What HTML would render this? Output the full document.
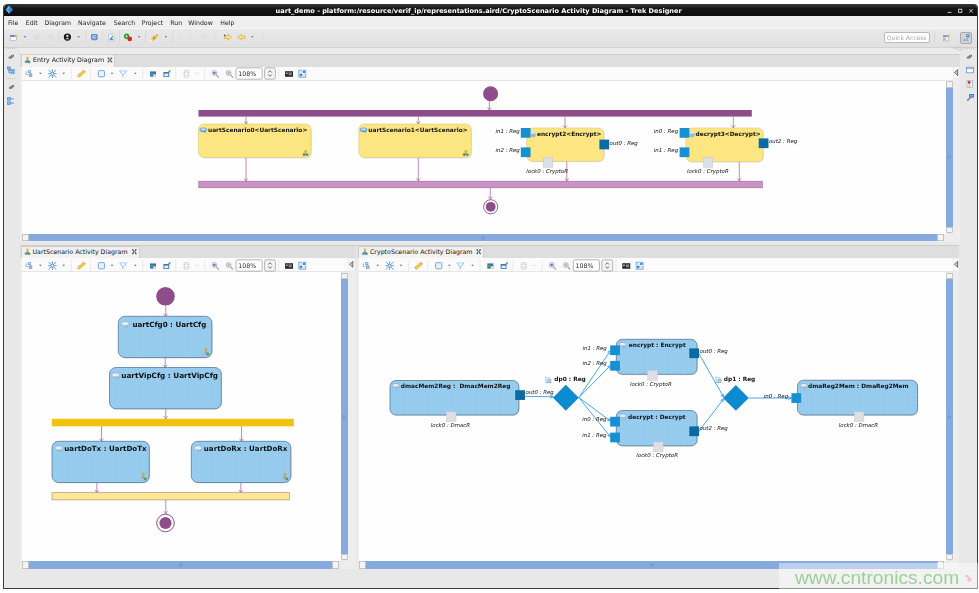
<!DOCTYPE html>
<html><head><meta charset="utf-8"><title>uart_demo - Trek Designer</title>
<style>
html,body{margin:0;padding:0;background:#fff;}
body{width:979px;height:593px;overflow:hidden;position:relative;font-family:"DejaVu Sans","Liberation Sans",sans-serif;font-size:6.2px;color:#222;}
div,span{position:absolute;box-sizing:border-box;white-space:nowrap;}
#win{left:3px;top:4px;width:975px;height:584.7px;background:#e8e8e8;border:1px solid #3c3c3c;border-top:none;border-radius:4px 4px 0 0;overflow:hidden;}
#title{left:0;top:0;width:975px;height:12px;background:linear-gradient(#3a3a3a,#141414 40%,#0c0c0c);border-radius:4px 4px 0 0;color:#fff;font-weight:bold;font-size:6.57px;line-height:12px;text-align:left;}
#menu{left:0;top:12px;width:975px;height:12.5px;background:#efefef;border-bottom:1px solid #f6f6f6;}
#menu span{top:0.6px;line-height:12.5px;font-size:6.2px;color:#1a1a1a;}
#tb{left:0;top:24.5px;width:975px;height:19.5px;background:linear-gradient(#e8e8e8,#e1e1e1);border-bottom:1px solid #d0d0d0;}
.tabstrip{background:#dedede;border-top:1px solid #cdcdcd;}
.tab{background:linear-gradient(#eeeeee,#f3f3f3);border:1px solid #d0d0d0;border-bottom:none;border-radius:2px 2px 0 0;font-size:6.28px;line-height:11.5px;color:#111;}
.etb{background:#fbfbfb;border-bottom:1px solid #e6e6e6;}
.canvas{background:#fefefe;}
.sb{background:#86a9de;}
.sbh{background:linear-gradient(#8fb0e3,#7fa4dc);}
.sbtn{background:#f4f4f4;border:1px solid #c4c4c4;border-radius:1px;}
.sep{width:0;border-left:1px dotted #cbcbcb;}
.zoom{background:#fff;border:1px solid #a9a9a9;border-radius:2px;font-size:6.2px;line-height:10px;padding-left:2px;color:#222;}
svg{position:absolute;left:0;top:0;opacity:0.999;}
#win{opacity:0.999;}
</style></head><body>

<div id="win">
<div id="title"><span style="left:271.6px;top:0.7px">uart_demo - platform:/resource/verif_ip/representations.aird/CryptoScenario Activity Diagram - Trek Designer</span></div>
<div id="menu">
<span style="left:4px">File</span>
<span style="left:21.8px">Edit</span>
<span style="left:40.5px">Diagram</span>
<span style="left:74px">Navigate</span>
<span style="left:109.8px">Search</span>
<span style="left:137.8px">Project</span>
<span style="left:166.3px">Run</span>
<span style="left:184.3px">Window</span>
<span style="left:216.3px">Help</span>
</div>
<div id="tb"></div>
<div style="left:880.00px;top:27.50px;width:45.50px;height:11.00px;background:#fff;border:1px solid #b9b9b9;border-radius:2px;color:#aaa;font-size:6.05px;line-height:9px;padding-left:1.8px;">Quick Access</div>
<div class="sep" style="left:930.00px;top:27.00px;width:0.00px;height:12.00px;"></div>
<div style="left:955.50px;top:27.50px;width:12.50px;height:12.00px;background:#d4d4d4;border:1px solid #a8a8a8;border-radius:2px;"></div>
<div style="left:15.50px;top:43.30px;width:940.00px;height:6.50px;background:#ececec;border-top:1px solid #d3d3d3;"></div>
<div style="left:15.50px;top:49.00px;width:940.00px;height:189.30px;background:#ededed;"></div>
<div class="tabstrip" style="left:15.50px;top:49.50px;width:940.00px;height:13.00px;"></div>
<div class="tab" style="left:17.00px;top:50.00px;width:93.50px;height:12.50px;"><span style="left:11.00px;top:-0.6px">Entry Activity Diagram</span></div>
<div class="etb" style="left:18.00px;top:62.50px;width:930.70px;height:14.40px;"></div>
<div style="left:949.70px;top:63.10px;width:4.80px;height:11.00px;background:#fbfbfb;"></div>
<div class="canvas" style="left:18.00px;top:76.90px;width:923.70px;height:153.10px;"></div>
<div style="left:941.70px;top:76.90px;width:7.00px;height:153.10px;background:#e9e9e9;"></div>
<div class="sb" style="left:941.70px;top:83.40px;width:7.00px;height:139.60px;"></div>
<div class="sbtn" style="left:941.70px;top:77.20px;width:7.00px;height:6.70px;"></div>
<div class="sbtn" style="left:941.70px;top:222.50px;width:7.00px;height:6.70px;"></div>
<div class="sb" style="left:18.00px;top:230.00px;width:922.20px;height:7.30px;"></div>
<div class="sbtn" style="left:18.00px;top:230.00px;width:6.80px;height:7.30px;"></div>
<div class="sbtn" style="left:933.00px;top:230.00px;width:7.20px;height:7.30px;"></div>
<div style="left:15.50px;top:240.50px;width:336.80px;height:324.80px;background:#ededed;"></div>
<div class="tabstrip" style="left:15.50px;top:241.00px;width:336.80px;height:13.00px;"></div>
<div class="tab" style="left:17.00px;top:241.50px;width:119.00px;height:12.50px;"><span style="left:10.50px;top:-0.6px">UartScenario Activity Diagram</span></div>
<div class="etb" style="left:18.00px;top:254.00px;width:325.80px;height:14.40px;"></div>
<div style="left:344.80px;top:254.60px;width:4.80px;height:11.00px;background:#fbfbfb;"></div>
<div class="canvas" style="left:18.00px;top:268.40px;width:318.80px;height:288.60px;"></div>
<div style="left:336.80px;top:268.40px;width:7.00px;height:288.60px;background:#e9e9e9;"></div>
<div class="sb" style="left:336.80px;top:274.90px;width:7.00px;height:275.10px;"></div>
<div class="sbtn" style="left:336.80px;top:268.70px;width:7.00px;height:6.70px;"></div>
<div class="sbtn" style="left:336.80px;top:549.50px;width:7.00px;height:6.70px;"></div>
<div class="sb" style="left:18.00px;top:557.00px;width:317.30px;height:8.00px;"></div>
<div class="sbtn" style="left:18.00px;top:557.00px;width:6.80px;height:8.00px;"></div>
<div class="sbtn" style="left:328.10px;top:557.00px;width:7.20px;height:8.00px;"></div>
<div style="left:352.80px;top:240.50px;width:602.70px;height:324.80px;background:#ededed;"></div>
<div class="tabstrip" style="left:352.80px;top:241.00px;width:602.70px;height:13.00px;"></div>
<div class="tab" style="left:354.30px;top:241.50px;width:125.50px;height:12.50px;"><span style="left:10.70px;top:-0.6px">CryptoScenario Activity Diagram</span></div>
<div class="etb" style="left:354.80px;top:254.00px;width:593.90px;height:14.40px;"></div>
<div style="left:949.70px;top:254.60px;width:4.80px;height:11.00px;background:#fbfbfb;"></div>
<div class="canvas" style="left:354.80px;top:268.40px;width:586.90px;height:288.60px;"></div>
<div style="left:941.70px;top:268.40px;width:7.00px;height:288.60px;background:#e9e9e9;"></div>
<div class="sb" style="left:941.70px;top:274.90px;width:7.00px;height:275.10px;"></div>
<div class="sbtn" style="left:941.70px;top:268.70px;width:7.00px;height:6.70px;"></div>
<div class="sbtn" style="left:941.70px;top:549.50px;width:7.00px;height:6.70px;"></div>
<div class="sb" style="left:354.80px;top:557.00px;width:585.40px;height:8.00px;"></div>
<div class="sbtn" style="left:354.80px;top:557.00px;width:6.80px;height:8.00px;"></div>
<div class="sbtn" style="left:933.00px;top:557.00px;width:7.20px;height:8.00px;"></div>
</div>
<svg width="979" height="593" viewBox="0 0 979 593" style="font-family:DejaVu Sans,Liberation Sans,sans-serif"><defs><pattern id="dy" width="3" height="4" patternUnits="userSpaceOnUse"><circle cx="0.75" cy="1" r="0.45" fill="#f5d05a"/><circle cx="2.25" cy="3" r="0.45" fill="#f5d05a"/></pattern><pattern id="db" width="3" height="4" patternUnits="userSpaceOnUse"><circle cx="0.75" cy="1" r="0.45" fill="#62bdee"/><circle cx="2.25" cy="3" r="0.45" fill="#62bdee"/></pattern></defs><circle cx="490.6" cy="93.8" r="7.5" fill="#8e4c8b"/>
<path d="M489.30 101.00V110.00M487.48 107.40L489.30 110.00L491.12 107.40" fill="none" stroke="#a25f9e" stroke-width="0.7"/>
<rect x="198.5" y="110" width="553.3" height="6.6" fill="#8e4c8b"/>
<rect x="198.8" y="181.2" width="563.5" height="6.6" fill="#c993c4" stroke="#a0639c" stroke-width="0.6"/>
<path d="M246.00 116.60V124.00M244.18 121.40L246.00 124.00L247.82 121.40" fill="none" stroke="#a25f9e" stroke-width="0.7"/>
<path d="M246.00 157.50V181.00M244.18 178.40L246.00 181.00L247.82 178.40" fill="none" stroke="#a25f9e" stroke-width="0.7"/>
<rect x="199.40" y="124.90" width="112.50" height="33.50" rx="5.5" fill="#000" opacity="0.10"/>
<rect x="198.50" y="124.00" width="112.50" height="33.50" rx="5.5" fill="#fde785" stroke="#d5c06a" stroke-width="0.5"/>
<rect x="199.50" y="125.00" width="110.50" height="31.50" rx="5.5" fill="url(#dy)"/>
<g transform="translate(199.40,127.60)"><ellipse cx="3.80" cy="2.27" rx="3.80" ry="2.27" fill="#6ea6d8"/><ellipse cx="3.80" cy="1.78" rx="2.74" ry="1.08" fill="#bcdcf4"/><path d="M3.42 3.78L6.08 5.4L6.08 3.24Z" fill="#5b96cc"/></g>
<text x="208.00" y="132.16" style="font-size:5.85px;font-weight:bold;" fill="#111" xml:space="preserve">uartScenario0&lt;UartScenario&gt;</text>
<g transform="translate(302.80,150.00)"><circle cx="2.8" cy="1.3" r="1.3" fill="#e8a92c"/><circle cx="1.4" cy="4.4" r="1.5" fill="#4b86c8"/><circle cx="4.3" cy="4.6" r="1.4" fill="#4aa24a"/><path d="M2.8 2.2L1.6 3.6M2.8 2.2L4 3.6" stroke="#777" stroke-width="0.4"/></g>
<path d="M418.30 116.60V124.00M416.48 121.40L418.30 124.00L420.12 121.40" fill="none" stroke="#a25f9e" stroke-width="0.7"/>
<path d="M418.30 157.50V181.00M416.48 178.40L418.30 181.00L420.12 178.40" fill="none" stroke="#a25f9e" stroke-width="0.7"/>
<rect x="359.70" y="124.90" width="112.40" height="33.50" rx="5.5" fill="#000" opacity="0.10"/>
<rect x="358.80" y="124.00" width="112.40" height="33.50" rx="5.5" fill="#fde785" stroke="#d5c06a" stroke-width="0.5"/>
<rect x="359.80" y="125.00" width="110.40" height="31.50" rx="5.5" fill="url(#dy)"/>
<g transform="translate(359.70,127.60)"><ellipse cx="3.80" cy="2.27" rx="3.80" ry="2.27" fill="#6ea6d8"/><ellipse cx="3.80" cy="1.78" rx="2.74" ry="1.08" fill="#bcdcf4"/><path d="M3.42 3.78L6.08 5.4L6.08 3.24Z" fill="#5b96cc"/></g>
<text x="368.30" y="132.16" style="font-size:5.85px;font-weight:bold;" fill="#111" xml:space="preserve">uartScenario1&lt;UartScenario&gt;</text>
<g transform="translate(463.00,150.00)"><circle cx="2.8" cy="1.3" r="1.3" fill="#e8a92c"/><circle cx="1.4" cy="4.4" r="1.5" fill="#4b86c8"/><circle cx="4.3" cy="4.6" r="1.4" fill="#4aa24a"/><path d="M2.8 2.2L1.6 3.6M2.8 2.2L4 3.6" stroke="#777" stroke-width="0.4"/></g>
<path d="M565.00 116.60V128.00M563.18 125.40L565.00 128.00L566.82 125.40" fill="none" stroke="#a25f9e" stroke-width="0.7"/>
<path d="M566.80 161.30V181.00M564.98 178.40L566.80 181.00L568.62 178.40" fill="none" stroke="#a25f9e" stroke-width="0.7"/>
<rect x="527.70" y="128.90" width="77.00" height="33.30" rx="5.5" fill="#000" opacity="0.10"/>
<rect x="526.80" y="128.00" width="77.00" height="33.30" rx="5.5" fill="#fde785" stroke="#d5c06a" stroke-width="0.5"/>
<rect x="527.80" y="129.00" width="75.00" height="31.30" rx="5.5" fill="url(#dy)"/>
<rect x="520.80" y="128.00" width="9.75" height="9.75" fill="#1590d2"/>
<rect x="520.80" y="147.40" width="9.75" height="9.75" fill="#1590d2"/>
<rect x="599.40" y="139.60" width="9.75" height="9.75" fill="#0a6aa3"/>
<rect x="543.20" y="157.60" width="9.6" height="9.6" fill="#dcdfe4" stroke="#c4c8ce" stroke-width="0.5"/>
<g transform="translate(530.70,131.50)"><rect x="0" y="0.8" width="4.6" height="4.6" rx="0.8" fill="#a6c3e6" stroke="#86a4cf" stroke-width="0.4"/><ellipse cx="2.3" cy="1.2" rx="2.3" ry="1" fill="#dce8f6"/><path d="M0.6 3.2H4M0.6 4.4H4" stroke="#7d9ccc" stroke-width="0.4"/></g>
<text x="537.00" y="136.16" style="font-size:5.85px;font-weight:bold;" fill="#111" xml:space="preserve">encrypt2&lt;Encrypt&gt;</text>
<text x="495.50" y="132.69" style="font-size:5.45px;font-style:italic;" fill="#111" xml:space="preserve">in1 : Reg</text>
<text x="495.50" y="152.09" style="font-size:5.45px;font-style:italic;" fill="#111" xml:space="preserve">in2 : Reg</text>
<text x="609.60" y="144.99" style="font-size:5.45px;font-style:italic;" fill="#111" xml:space="preserve">out0 : Reg</text>
<text x="526.30" y="172.88" style="font-size:5.45px;font-style:italic;" fill="#111" xml:space="preserve">lock0 : CryptoR</text>
<path d="M733.30 116.60V128.00M731.48 125.40L733.30 128.00L735.12 125.40" fill="none" stroke="#a25f9e" stroke-width="0.7"/>
<path d="M739.30 161.60V181.00M737.48 178.40L739.30 181.00L741.12 178.40" fill="none" stroke="#a25f9e" stroke-width="0.7"/>
<rect x="686.70" y="128.90" width="77.20" height="33.60" rx="5.5" fill="#000" opacity="0.10"/>
<rect x="685.80" y="128.00" width="77.20" height="33.60" rx="5.5" fill="#fde785" stroke="#d5c06a" stroke-width="0.5"/>
<rect x="686.80" y="129.00" width="75.20" height="31.60" rx="5.5" fill="url(#dy)"/>
<rect x="679.60" y="128.00" width="9.75" height="9.75" fill="#1590d2"/>
<rect x="679.60" y="147.40" width="9.75" height="9.75" fill="#1590d2"/>
<rect x="758.70" y="138.40" width="9.75" height="9.75" fill="#0a6aa3"/>
<rect x="703.20" y="157.60" width="9.6" height="9.6" fill="#dcdfe4" stroke="#c4c8ce" stroke-width="0.5"/>
<g transform="translate(689.60,131.50)"><rect x="0" y="0.8" width="4.6" height="4.6" rx="0.8" fill="#a6c3e6" stroke="#86a4cf" stroke-width="0.4"/><ellipse cx="2.3" cy="1.2" rx="2.3" ry="1" fill="#dce8f6"/><path d="M0.6 3.2H4M0.6 4.4H4" stroke="#7d9ccc" stroke-width="0.4"/></g>
<text x="695.50" y="136.16" style="font-size:5.85px;font-weight:bold;" fill="#111" xml:space="preserve">decrypt3&lt;Decrypt&gt;</text>
<text x="653.80" y="132.69" style="font-size:5.45px;font-style:italic;" fill="#111" xml:space="preserve">in0 : Reg</text>
<text x="653.80" y="152.09" style="font-size:5.45px;font-style:italic;" fill="#111" xml:space="preserve">in1 : Reg</text>
<text x="769.00" y="143.49" style="font-size:5.45px;font-style:italic;" fill="#111" xml:space="preserve">out2 : Reg</text>
<text x="687.00" y="172.88" style="font-size:5.45px;font-style:italic;" fill="#111" xml:space="preserve">lock0 : CryptoR</text>
<path d="M490.30 188.00V199.20M488.48 196.60L490.30 199.20L492.12 196.60" fill="none" stroke="#a25f9e" stroke-width="0.7"/>
<circle cx="490.7" cy="206.8" r="7.1" fill="#fff" stroke="#8e4c8b" stroke-width="0.9"/><circle cx="490.7" cy="206.8" r="4.9" fill="#8e4c8b"/>
<circle cx="165.5" cy="296.3" r="9.3" fill="#8e4c8b"/>
<path d="M165.80 305.50V316.30M163.98 313.70L165.80 316.30L167.62 313.70" fill="none" stroke="#a25f9e" stroke-width="0.7"/>
<rect x="119.20" y="317.20" width="93.60" height="41.30" rx="6.5" fill="#000" opacity="0.10"/>
<rect x="118.30" y="316.30" width="93.60" height="41.30" rx="6.5" fill="#9acced" stroke="#466b86" stroke-width="0.7"/>
<rect x="119.30" y="317.30" width="91.60" height="39.30" rx="6.5" fill="url(#db)"/>
<g transform="translate(121.00,321.40)"><ellipse cx="4.25" cy="2.34" rx="3.95" ry="2.21" fill="#e3edf7" stroke="#8a9fba" stroke-width="0.6"/><path d="M4.68 3.90V6.5M6.80 3.90V6.5" stroke="#8fa9c4" stroke-width="0.7" fill="none"/></g>
<text x="132.50" y="327.04" style="font-size:7.12px;font-weight:bold;" fill="#111" xml:space="preserve">uartCfg0 : UartCfg</text>
<g transform="translate(202.80,347.70)"><circle cx="3.2" cy="1.7" r="1.6" fill="#e9aa2e"/><path d="M3.2 0.2L4 1H2.4Z" fill="#58a84a"/><path d="M0.3 7.2L3 3.2L5.6 7.2Z" fill="#8fa6d4" stroke="#6f88bb" stroke-width="0.4"/><ellipse cx="1.8" cy="6.6" rx="1.8" ry="1" fill="#b4bfe0"/><circle cx="5.2" cy="6.2" r="1.4" fill="#4aa63c"/></g>
<path d="M165.20 357.60V367.50M163.38 364.90L165.20 367.50L167.02 364.90" fill="none" stroke="#a25f9e" stroke-width="0.7"/>
<rect x="110.40" y="368.40" width="111.80" height="41.30" rx="6.5" fill="#000" opacity="0.10"/>
<rect x="109.50" y="367.50" width="111.80" height="41.30" rx="6.5" fill="#9acced" stroke="#466b86" stroke-width="0.7"/>
<rect x="110.50" y="368.50" width="109.80" height="39.30" rx="6.5" fill="url(#db)"/>
<g transform="translate(111.50,372.60)"><ellipse cx="4.25" cy="2.34" rx="3.95" ry="2.21" fill="#e3edf7" stroke="#8a9fba" stroke-width="0.6"/><path d="M4.68 3.90V6.5M6.80 3.90V6.5" stroke="#8fa9c4" stroke-width="0.7" fill="none"/></g>
<text x="121.30" y="378.38" style="font-size:7.28px;font-weight:bold;" fill="#111" xml:space="preserve">uartVipCfg : UartVipCfg</text>
<path d="M165.80 408.80V418.80M163.98 416.20L165.80 418.80L167.62 416.20" fill="none" stroke="#a25f9e" stroke-width="0.7"/>
<rect x="51.8" y="418.8" width="242" height="7.5" fill="#efc30e"/>
<path d="M101.50 426.30V441.30M99.68 438.70L101.50 441.30L103.32 438.70" fill="none" stroke="#a25f9e" stroke-width="0.7"/>
<path d="M241.50 426.30V441.30M239.68 438.70L241.50 441.30L243.32 438.70" fill="none" stroke="#a25f9e" stroke-width="0.7"/>
<rect x="52.90" y="442.20" width="97.30" height="41.20" rx="6.5" fill="#000" opacity="0.10"/>
<rect x="52.00" y="441.30" width="97.30" height="41.20" rx="6.5" fill="#9acced" stroke="#466b86" stroke-width="0.7"/>
<rect x="53.00" y="442.30" width="95.30" height="39.20" rx="6.5" fill="url(#db)"/>
<g transform="translate(54.50,445.60)"><ellipse cx="4.25" cy="2.34" rx="3.95" ry="2.21" fill="#e3edf7" stroke="#8a9fba" stroke-width="0.6"/><path d="M4.68 3.90V6.5M6.80 3.90V6.5" stroke="#8fa9c4" stroke-width="0.7" fill="none"/></g>
<text x="64.30" y="451.33" style="font-size:7.1px;font-weight:bold;" fill="#111" xml:space="preserve">uartDoTx : UartDoTx</text>
<g transform="translate(140.20,472.60)"><circle cx="3.2" cy="1.7" r="1.6" fill="#e9aa2e"/><path d="M3.2 0.2L4 1H2.4Z" fill="#58a84a"/><path d="M0.3 7.2L3 3.2L5.6 7.2Z" fill="#8fa6d4" stroke="#6f88bb" stroke-width="0.4"/><ellipse cx="1.8" cy="6.6" rx="1.8" ry="1" fill="#b4bfe0"/><circle cx="5.2" cy="6.2" r="1.4" fill="#4aa63c"/></g>
<rect x="192.20" y="442.20" width="99.50" height="41.20" rx="6.5" fill="#000" opacity="0.10"/>
<rect x="191.30" y="441.30" width="99.50" height="41.20" rx="6.5" fill="#9acced" stroke="#466b86" stroke-width="0.7"/>
<rect x="192.30" y="442.30" width="97.50" height="39.20" rx="6.5" fill="url(#db)"/>
<g transform="translate(193.80,445.60)"><ellipse cx="4.25" cy="2.34" rx="3.95" ry="2.21" fill="#e3edf7" stroke="#8a9fba" stroke-width="0.6"/><path d="M4.68 3.90V6.5M6.80 3.90V6.5" stroke="#8fa9c4" stroke-width="0.7" fill="none"/></g>
<text x="203.80" y="451.33" style="font-size:7.1px;font-weight:bold;" fill="#111" xml:space="preserve">uartDoRx : UartDoRx</text>
<g transform="translate(281.70,472.60)"><circle cx="3.2" cy="1.7" r="1.6" fill="#e9aa2e"/><path d="M3.2 0.2L4 1H2.4Z" fill="#58a84a"/><path d="M0.3 7.2L3 3.2L5.6 7.2Z" fill="#8fa6d4" stroke="#6f88bb" stroke-width="0.4"/><ellipse cx="1.8" cy="6.6" rx="1.8" ry="1" fill="#b4bfe0"/><circle cx="5.2" cy="6.2" r="1.4" fill="#4aa63c"/></g>
<path d="M96.80 482.50V492.50M94.98 489.90L96.80 492.50L98.62 489.90" fill="none" stroke="#a25f9e" stroke-width="0.7"/>
<path d="M240.80 482.50V492.50M238.98 489.90L240.80 492.50L242.62 489.90" fill="none" stroke="#a25f9e" stroke-width="0.7"/>
<rect x="52" y="492.7" width="237.4" height="7.2" fill="#fde88e" stroke="#a979a6" stroke-width="0.6"/>
<path d="M165.80 500.00V513.80M163.98 511.20L165.80 513.80L167.62 511.20" fill="none" stroke="#a25f9e" stroke-width="0.7"/>
<circle cx="165.5" cy="523" r="8.8" fill="#fff" stroke="#8e4c8b" stroke-width="1"/><circle cx="165.5" cy="523" r="6.1" fill="#8e4c8b"/>
<path d="M525.00 396.30L553.20 396.80M550.17 395.27L553.20 396.80L550.11 398.22" fill="none" stroke="#48a6ea" stroke-width="1.0"/>
<path d="M578.80 397.50L610.50 350.50M607.56 352.21L610.50 350.50L610.01 353.87" fill="none" stroke="#48a6ea" stroke-width="1.0"/>
<path d="M578.80 397.50L610.50 365.50M607.29 366.63L610.50 365.50L609.40 368.72" fill="none" stroke="#48a6ea" stroke-width="1.0"/>
<path d="M578.80 397.50L610.50 421.00M608.92 417.99L610.50 421.00L607.16 420.36" fill="none" stroke="#48a6ea" stroke-width="1.0"/>
<path d="M578.80 397.50L610.50 437.00M609.74 433.69L610.50 437.00L607.43 435.54" fill="none" stroke="#48a6ea" stroke-width="1.0"/>
<path d="M698.80 353.30L723.50 397.00M723.28 393.61L723.50 397.00L720.71 395.06" fill="none" stroke="#48a6ea" stroke-width="1.0"/>
<path d="M698.80 431.30L723.50 399.00M720.47 400.53L723.50 399.00L722.82 402.33" fill="none" stroke="#48a6ea" stroke-width="1.0"/>
<path d="M748.80 398.00L791.30 398.00M788.24 396.52L791.30 398.00L788.24 399.48" fill="none" stroke="#48a6ea" stroke-width="1.0"/>
<rect x="390.90" y="381.40" width="128.80" height="34.50" rx="6" fill="#000" opacity="0.10"/>
<rect x="390.00" y="380.50" width="128.80" height="34.50" rx="6" fill="#9acced" stroke="#466b86" stroke-width="0.7"/>
<rect x="391.00" y="381.50" width="126.80" height="32.50" rx="6" fill="url(#db)"/>
<g transform="translate(392.00,383.30)"><ellipse cx="3.75" cy="2.02" rx="3.45" ry="1.90" fill="#e3edf7" stroke="#8a9fba" stroke-width="0.6"/><path d="M4.12 3.36V5.6M6.00 3.36V5.6" stroke="#8fa9c4" stroke-width="0.7" fill="none"/></g>
<text x="400.80" y="388.45" style="font-size:5.85px;font-weight:bold;" fill="#111" xml:space="preserve">dmacMem2Reg :  DmacMem2Reg</text>
<rect x="515.20" y="390.20" width="9.75" height="9.75" fill="#0a6aa3"/>
<rect x="446.40" y="411.80" width="9.6" height="9.6" fill="#dcdfe4" stroke="#c4c8ce" stroke-width="0.5"/>
<text x="525.60" y="394.19" style="font-size:5.45px;font-style:italic;" fill="#111" xml:space="preserve">out0 : Reg</text>
<text x="430.80" y="426.69" style="font-size:5.45px;font-style:italic;" fill="#111" xml:space="preserve">lock0 : DmacR</text>
<path d="M553 397.7L565.8 384.8L578.8 397.7L565.8 410.7Z" fill="#0d8bd0"/>
<g transform="translate(545.30,376.50)" fill="none" stroke="#7aa0cc" stroke-width="0.7"><path d="M0.6 0V6.2H3"/><rect x="2.6" y="3.2" width="3" height="3" fill="#bfd4ea"/><path d="M2 1.5H5"/></g>
<text x="554.30" y="381.15" style="font-size:5.85px;font-weight:bold;" fill="#111" xml:space="preserve">dp0 : Reg</text>
<rect x="617.20" y="340.20" width="80.70" height="35.00" rx="6" fill="#000" opacity="0.10"/>
<rect x="616.30" y="339.30" width="80.70" height="35.00" rx="6" fill="#9acced" stroke="#466b86" stroke-width="0.7"/>
<rect x="617.30" y="340.30" width="78.70" height="33.00" rx="6" fill="url(#db)"/>
<g transform="translate(619.00,342.20)"><ellipse cx="3.75" cy="2.02" rx="3.45" ry="1.90" fill="#e3edf7" stroke="#8a9fba" stroke-width="0.6"/><path d="M4.12 3.36V5.6M6.00 3.36V5.6" stroke="#8fa9c4" stroke-width="0.7" fill="none"/></g>
<text x="628.80" y="347.15" style="font-size:5.85px;font-weight:bold;" fill="#111" xml:space="preserve">encrypt : Encrypt</text>
<rect x="610.20" y="345.40" width="9.75" height="9.75" fill="#1590d2"/>
<rect x="610.20" y="360.90" width="9.75" height="9.75" fill="#1590d2"/>
<rect x="689.30" y="348.40" width="9.75" height="9.75" fill="#0a6aa3"/>
<rect x="647.60" y="370.60" width="9.6" height="9.6" fill="#dcdfe4" stroke="#c4c8ce" stroke-width="0.5"/>
<text x="582.50" y="350.49" style="font-size:5.45px;font-style:italic;" fill="#111" xml:space="preserve">in1 : Reg</text>
<text x="582.50" y="365.49" style="font-size:5.45px;font-style:italic;" fill="#111" xml:space="preserve">in2 : Reg</text>
<text x="699.60" y="352.99" style="font-size:5.45px;font-style:italic;" fill="#111" xml:space="preserve">out0 : Reg</text>
<text x="630.00" y="385.99" style="font-size:5.45px;font-style:italic;" fill="#111" xml:space="preserve">lock0 : CryptoR</text>
<rect x="617.20" y="411.40" width="80.70" height="35.30" rx="6" fill="#000" opacity="0.10"/>
<rect x="616.30" y="410.50" width="80.70" height="35.30" rx="6" fill="#9acced" stroke="#466b86" stroke-width="0.7"/>
<rect x="617.30" y="411.50" width="78.70" height="33.30" rx="6" fill="url(#db)"/>
<g transform="translate(619.00,413.80)"><ellipse cx="3.75" cy="2.02" rx="3.45" ry="1.90" fill="#e3edf7" stroke="#8a9fba" stroke-width="0.6"/><path d="M4.12 3.36V5.6M6.00 3.36V5.6" stroke="#8fa9c4" stroke-width="0.7" fill="none"/></g>
<text x="628.00" y="418.95" style="font-size:5.85px;font-weight:bold;" fill="#111" xml:space="preserve">decrypt : Decrypt</text>
<rect x="610.20" y="416.80" width="9.75" height="9.75" fill="#1590d2"/>
<rect x="610.20" y="432.60" width="9.75" height="9.75" fill="#1590d2"/>
<rect x="689.30" y="426.40" width="9.75" height="9.75" fill="#0a6aa3"/>
<rect x="653.40" y="442.00" width="9.6" height="9.6" fill="#dcdfe4" stroke="#c4c8ce" stroke-width="0.5"/>
<text x="582.20" y="420.99" style="font-size:5.45px;font-style:italic;" fill="#111" xml:space="preserve">in0 : Reg</text>
<text x="582.20" y="436.88" style="font-size:5.45px;font-style:italic;" fill="#111" xml:space="preserve">in1 : Reg</text>
<text x="699.60" y="430.49" style="font-size:5.45px;font-style:italic;" fill="#111" xml:space="preserve">out2 : Reg</text>
<text x="636.30" y="457.49" style="font-size:5.45px;font-style:italic;" fill="#111" xml:space="preserve">lock0 : CryptoR</text>
<path d="M723 398L735.8 385L748.8 398L735.8 410.8Z" fill="#0d8bd0"/>
<g transform="translate(715.50,376.30)" fill="none" stroke="#7aa0cc" stroke-width="0.7"><path d="M0.6 0V6.2H3"/><rect x="2.6" y="3.2" width="3" height="3" fill="#bfd4ea"/><path d="M2 1.5H5"/></g>
<text x="723.80" y="381.15" style="font-size:5.85px;font-weight:bold;" fill="#111" xml:space="preserve">dp1 : Reg</text>
<rect x="798.40" y="381.10" width="120.00" height="34.80" rx="6" fill="#000" opacity="0.10"/>
<rect x="797.50" y="380.20" width="120.00" height="34.80" rx="6" fill="#9acced" stroke="#466b86" stroke-width="0.7"/>
<rect x="798.50" y="381.20" width="118.00" height="32.80" rx="6" fill="url(#db)"/>
<g transform="translate(800.00,383.30)"><ellipse cx="3.75" cy="2.02" rx="3.45" ry="1.90" fill="#e3edf7" stroke="#8a9fba" stroke-width="0.6"/><path d="M4.12 3.36V5.6M6.00 3.36V5.6" stroke="#8fa9c4" stroke-width="0.7" fill="none"/></g>
<text x="808.00" y="388.45" style="font-size:5.85px;font-weight:bold;" fill="#111" xml:space="preserve">dmaReg2Mem : DmaReg2Mem</text>
<rect x="791.40" y="393.20" width="9.75" height="9.75" fill="#1590d2"/>
<rect x="854.30" y="411.80" width="9.6" height="9.6" fill="#dcdfe4" stroke="#c4c8ce" stroke-width="0.5"/>
<text x="763.80" y="397.99" style="font-size:5.45px;font-style:italic;" fill="#111" xml:space="preserve">in0 : Reg</text>
<text x="838.80" y="426.69" style="font-size:5.45px;font-style:italic;" fill="#111" xml:space="preserve">lock0 : DmacR</text><g transform="translate(5.6,5.6)"><path d="M3.6 0L7.4 4.2L3.6 8.2L0 4.2Z" fill="#2f8fdc"/><path d="M3.6 0L3.6 8.2L0 4.2Z" fill="#5fb2f0"/><path d="M0 4.2H7.4" stroke="#1c5fa8" stroke-width="0.5"/></g>
<g stroke="#d2d2d2" stroke-width="0.9" fill="none"><path d="M947.6 12.4H951.4"/><rect x="958.6" y="9.2" width="3.2" height="3.2"/><path d="M969.3 9L972.9 12.6M972.9 9L969.3 12.6"/></g>
<g transform="translate(10.2,34.3)"><rect x="0" y="1" width="6.2" height="5.4" fill="#fff" stroke="#8aa0b8" stroke-width="0.5"/><rect x="0" y="1" width="6.2" height="1.5" fill="#3f74c0"/><path d="M5.6 -0.6L6.1 0.6L7.4 0.8L6.4 1.6L6.7 2.9L5.6 2.2L4.5 2.9L4.8 1.6L3.8 0.8L5.1 0.6Z" fill="#f2c22e"/></g>
<path d="M23.65 36.20H26.35L25.00 37.80Z" fill="#6a6a6a"/>
<rect x="33.5" y="34.5" width="6" height="5.5" fill="#dcdce0" opacity="0.7"/><circle cx="50.5" cy="37.3" r="3.3" fill="#dddde1" opacity="0.7"/>
<path d="M58.50 31.50V43.00" stroke="#cbc5b9" stroke-width="0.8" stroke-dasharray="0.9 1.1" fill="none"/>
<circle cx="67.4" cy="37.1" r="3.6" fill="#151515"/><circle cx="67.4" cy="36" r="1.2" fill="#ddd"/><path d="M65.2 39.2Q67.4 36.6 69.6 39.2Z" fill="#ccc"/>
<path d="M77.35 36.20H80.05L78.70 37.80Z" fill="#6a6a6a"/>
<path d="M85.70 31.50V43.00" stroke="#cbc5b9" stroke-width="0.8" stroke-dasharray="0.9 1.1" fill="none"/>
<g transform="translate(91.2,34.2)"><rect x="0" y="0" width="6.3" height="5.6" rx="0.8" fill="#3a78c8"/><rect x="1.2" y="1.1" width="3.9" height="3.2" fill="#cfe2f6"/><rect x="2.2" y="5.6" width="2" height="0.7" fill="#6d8fb8"/><path d="M2.2 2.2H4V3.6" stroke="#2a5da0" stroke-width="0.6" fill="none"/></g>
<path d="M102.20 31.50V43.00" stroke="#cbc5b9" stroke-width="0.8" stroke-dasharray="0.9 1.1" fill="none"/>
<g transform="translate(108.7,34)"><path d="M0 0H3.8L5.5 1.7V7H0Z" fill="#f4f8fc" stroke="#8ea4bd" stroke-width="0.5"/><path d="M0.8 6L2.6 2.6L4.6 6Z" fill="#4c8ad0"/><circle cx="3.8" cy="2.6" r="0.8" fill="#59a94f"/></g>
<path d="M119.50 31.50V43.00" stroke="#cbc5b9" stroke-width="0.8" stroke-dasharray="0.9 1.1" fill="none"/>
<circle cx="126.6" cy="36.2" r="2.7" fill="#2f9a38"/><path d="M125.8 34.9L128 36.2L125.8 37.5Z" fill="#e6f5e3"/><circle cx="129.7" cy="38.9" r="2.3" fill="#d8232a"/>
<path d="M137.75 36.20H140.45L139.10 37.80Z" fill="#6a6a6a"/>
<path d="M145.60 31.50V43.00" stroke="#cbc5b9" stroke-width="0.8" stroke-dasharray="0.9 1.1" fill="none"/>
<g transform="translate(154.6,37.5) rotate(-42)"><rect x="-4.6" y="-1.5" width="8" height="3" rx="1.2" fill="#f0c443"/><path d="M3.2 -1.5Q5.6 0 3.2 1.5Z" fill="#e2a72b"/><rect x="-5.4" y="-1" width="1.6" height="2" fill="#fff7d8"/><rect x="-1.5" y="-1.5" width="1.6" height="3" fill="#a58a6a"/></g>
<path d="M164.55 36.20H167.25L165.90 37.80Z" fill="#6a6a6a"/>
<path d="M172.60 31.50V43.00" stroke="#cbc5b9" stroke-width="0.8" stroke-dasharray="0.9 1.1" fill="none"/>
<g opacity="0.55" fill="none" stroke="#cfcfd2" stroke-width="0.8"><path d="M179.7 34V40"/><path d="M201 35.5L203.5 39.5L206 35.5Z"/><path d="M262 35L266 39M262 39L264 37"/></g>
<path d="M189.65 36.20H192.35L191.00 37.80Z" fill="#d4d4d4"/>
<path d="M213.15 36.20H215.85L214.50 37.80Z" fill="#d4d4d4"/>
<path d="M224.3 36H228V34.4L231.6 37.2L228 40V38.5H224.3Z" fill="#fae28a" stroke="#d4a128" stroke-width="0.6"/><rect x="224" y="34.6" width="1.4" height="1.6" fill="#3d5f94"/>
<path d="M245 36H241.2V34.4L237.5 37.2L241.2 40V38.5H245Z" fill="#fae28a" stroke="#d4a128" stroke-width="0.6"/>
<path d="M250.95 36.20H253.65L252.30 37.80Z" fill="#6a6a6a"/>
<g transform="translate(943.4,34.5)"><rect x="0" y="1" width="5.2" height="5.4" fill="#f6f6f2" stroke="#8a99a8" stroke-width="0.5"/><rect x="0" y="1" width="5.2" height="1.4" fill="#5d8fd0"/><rect x="0.7" y="3.2" width="1.7" height="2.4" fill="#9fc08c"/><path d="M5.2 -0.6L5.7 0.5L6.9 0.7L6 1.5L6.3 2.7L5.2 2L4.1 2.7L4.4 1.5L3.5 0.7L4.7 0.5Z" fill="#f0c030"/></g>
<g transform="translate(962.2,34)"><path d="M0.5 7L2 4L3.4 6L5 3L6.6 7Z" fill="#8fb4de"/><rect x="4.2" y="0" width="3" height="3.3" fill="#3d7cc8"/><rect x="4.9" y="0.7" width="1.6" height="1.2" fill="#cfe0f4"/></g>
<g stroke="#bdbdbd" stroke-width="0.6" fill="none"><rect x="953.8" y="47.3" width="3" height="1.6"/><rect x="958.3" y="47" width="3" height="3"/></g>
<path d="M963.00 48.30H974.00" stroke="#b9b2a4" stroke-width="0.8" stroke-dasharray="0.9 1.1" fill="none"/>
<path d="M6.00 48.30H16.00" stroke="#b9b2a4" stroke-width="0.8" stroke-dasharray="0.9 1.1" fill="none"/>
<g transform="translate(8.6,54.8)"><path d="M0 2.5L3 0H5.4V1.6L2.6 3.9H0Z" fill="#8a8a8a"/><path d="M0 2.5H2.6L5.4 0.2" stroke="#555" stroke-width="0.4" fill="none"/></g>
<g transform="translate(7.2,66.6)" fill="none" stroke="#4a8ad0" stroke-width="0.9"><rect x="0.4" y="0.4" width="2.6" height="2.2" fill="#9cc4ec"/><path d="M1.7 2.6V6.2H4M1.7 4H4"/><rect x="4" y="3" width="3.2" height="1.6" fill="#9cc4ec" stroke-width="0.6"/><rect x="4" y="5.4" width="3.2" height="1.6" fill="#9cc4ec" stroke-width="0.6"/></g>
<path d="M6.00 78.60H16.00" stroke="#b9b2a4" stroke-width="0.8" stroke-dasharray="0.9 1.1" fill="none"/>
<g transform="translate(9,85)"><path d="M0 2.5L3 0H5.2V1.6L2.6 3.9H0Z" fill="#8a8a8a"/><path d="M0 2.5H2.6L5.2 0.2" stroke="#555" stroke-width="0.4" fill="none"/></g>
<g transform="translate(7.2,97.3)" fill="none" stroke="#4a8ad0" stroke-width="0.8"><rect x="0.4" y="0.4" width="2.8" height="2.4" fill="#9cc4ec"/><rect x="0.4" y="4.6" width="2.8" height="2.4" fill="#9cc4ec"/><path d="M3.2 1.6H6.8M3.2 5.8H6.8"/></g>
<g transform="translate(966.8,54.8)"><path d="M0 2.5L3 0H5.2V1.6L2.6 3.9H0Z" fill="#8a8a8a"/><path d="M0 2.5H2.6L5.2 0.2" stroke="#555" stroke-width="0.4" fill="none"/></g>
<g transform="translate(966.6,67.2)"><rect x="0" y="0" width="7" height="5.6" fill="#fdfdfd" stroke="#5b86c0" stroke-width="0.7"/><path d="M0 1.4H7" stroke="#5b86c0" stroke-width="0.7"/></g>
<g transform="translate(967,80.5)"><rect x="0" y="0" width="5.6" height="7" fill="#f4f7fb" stroke="#8fa6c4" stroke-width="0.6"/><circle cx="2.2" cy="2" r="1.4" fill="#d82a2a"/><path d="M0.9 6L2.3 3.8L3.8 6Z" fill="#e3b531"/></g>
<g transform="translate(966.6,94)"><rect x="2.6" y="0" width="4.6" height="3.6" fill="#2f66b8"/><rect x="3.4" y="0.7" width="3" height="2" fill="#7fb0ea"/><path d="M0 6.2L3.4 2.8L4.6 4L1.2 7.2Z" fill="#8c8c8c"/></g>
<g transform="translate(25.60,70.20)" fill="none" stroke="#6b9bd6" stroke-width="0.7"><path d="M0.4 1V4.4H2.6"/><rect x="2.6" y="0.3" width="2.4" height="2.2" fill="#cfe0f5"/><rect x="3.6" y="3.6" width="2.6" height="2.6" fill="#9fc0ea"/></g>
<path d="M39.05 72.70H41.75L40.40 74.30Z" fill="#6a6a6a"/>
<g transform="translate(52.40,73.70)" stroke="#4a8ad4" stroke-width="1" fill="none"><path d="M-3.8 -3.8L3.8 3.8M3.8 -3.8L-3.8 3.8M0 -4.2V4.2M-4.2 0H4.2" opacity="0.85"/><circle r="1.5" fill="#e8f1fb" stroke-width="0.7"/></g>
<path d="M62.35 72.70H65.05L63.70 74.30Z" fill="#6a6a6a"/>
<path d="M71.40 68.00V79.00" stroke="#cfcdc8" stroke-width="0.8" stroke-dasharray="0.9 1.1" fill="none"/>
<g transform="translate(81.40,73.70) rotate(-40)"><rect x="-4.4" y="-1.4" width="4.2" height="2.8" rx="1.2" fill="#f4cb45" stroke="#d29d22" stroke-width="0.5"/><rect x="0.2" y="-1.4" width="4.2" height="2.8" rx="1.2" fill="#f4cb45" stroke="#d29d22" stroke-width="0.5"/></g>
<path d="M90.50 68.00V79.00" stroke="#cfcdc8" stroke-width="0.8" stroke-dasharray="0.9 1.1" fill="none"/>
<rect x="98.30" y="70.60" width="6.2" height="6.2" rx="1" fill="#e8f0fa" stroke="#7ea6da" stroke-width="1"/>
<path d="M110.65 72.70H113.35L112.00 74.30Z" fill="#6a6a6a"/>
<g transform="translate(119.50,70.30)" fill="none" stroke="#8fbce8" stroke-width="1"><path d="M0 0.5L3.4 4.6V7M7.4 0.5L3.8 4.6"/><path d="M0.5 0.6H7" stroke-width="0.7"/></g>
<path d="M133.95 72.70H136.65L135.30 74.30Z" fill="#6a6a6a"/>
<path d="M142.70 68.00V79.00" stroke="#cfcdc8" stroke-width="0.8" stroke-dasharray="0.9 1.1" fill="none"/>
<g transform="translate(150.00,71.40)"><rect x="0" y="0" width="6" height="5.2" fill="#3a72bd"/><rect x="0.8" y="1.6" width="3" height="2.2" fill="#4aa55a"/><rect x="3.4" y="3" width="2.4" height="2.2" fill="#f2f6fb"/></g>
<g transform="translate(163.40,70.00)"><rect x="0" y="2" width="5.8" height="5" fill="#3a78c6"/><rect x="0.9" y="3.6" width="4" height="2.6" fill="#e4eefa"/><path d="M4 2.6L6.6 0L7.4 0.8L4.8 3.4Z" fill="#3d9a48"/></g>
<path d="M175.70 68.00V79.00" stroke="#cfcdc8" stroke-width="0.8" stroke-dasharray="0.9 1.1" fill="none"/>
<g transform="translate(183.00,70.20)" fill="none" stroke="#d2d2d2" stroke-width="0.8"><rect x="1.6" y="0.4" width="3.6" height="6.6"/><path d="M0 2H7M0 5H7"/></g>
<path d="M195.80 72.60L197.30 74.20L198.80 72.60" stroke="#d0d0d0" stroke-width="0.7" fill="none"/>
<path d="M204.80 68.00V79.00" stroke="#cfcdc8" stroke-width="0.8" stroke-dasharray="0.9 1.1" fill="none"/>
<g transform="translate(211.40,70.00)"><circle cx="3" cy="3" r="2.4" fill="#e4eaf3" stroke="#9a9fa8" stroke-width="0.7"/><rect x="2" y="2" width="2" height="2" fill="#3d6fc4"/><path d="M4.9 4.9L7.4 7.6" stroke="#a89f92" stroke-width="1.2"/></g>
<g transform="translate(225.60,70.00)"><circle cx="3" cy="3" r="2.4" fill="#e4eaf3" stroke="#9a9fa8" stroke-width="0.7"/><rect x="2" y="2" width="2" height="2" fill="#9db6da"/><path d="M4.9 4.9L7.4 7.6" stroke="#a89f92" stroke-width="1.2"/></g>
<rect x="236.00" y="67.80" width="26.2" height="11.4" rx="1.6" fill="#fff" stroke="#a2a2a2" stroke-width="0.8"/>
<text x="238.30" y="76.00" style="font-size:6.3px" fill="#2a2a2a">108%</text>
<rect x="264.60" y="67.80" width="10.8" height="11.4" rx="1.6" fill="#f3f3f3" stroke="#a2a2a2" stroke-width="0.8"/>
<path d="M268.30 72.50L270.00 70.70L271.70 72.50M268.30 74.50L270.00 76.30L271.70 74.50" stroke="#444" stroke-width="0.8" fill="none"/>
<path d="M278.70 68.00V79.00" stroke="#cfcdc8" stroke-width="0.8" stroke-dasharray="0.9 1.1" fill="none"/>
<g transform="translate(285.00,71.20)"><rect x="0" y="0" width="8" height="5.6" fill="#2b2b2b"/><rect x="3.6" y="1.2" width="3.2" height="2.8" fill="#7d8790"/><rect x="0.8" y="1.4" width="1.8" height="1.4" fill="#bbb"/></g>
<g transform="translate(298.80,70.20)"><rect x="0" y="0" width="7" height="7" fill="#d9e8f8" stroke="#5a96da" stroke-width="0.7"/><rect x="1" y="3.2" width="2.6" height="2.8" fill="#3f80d0"/><rect x="4" y="0.8" width="2.2" height="2" fill="#3f80d0"/><path d="M3.6 0V7M0 3.2H7" stroke="#fff" stroke-width="0.5"/></g>
<g transform="translate(25.60,262.20)" fill="none" stroke="#6b9bd6" stroke-width="0.7"><path d="M0.4 1V4.4H2.6"/><rect x="2.6" y="0.3" width="2.4" height="2.2" fill="#cfe0f5"/><rect x="3.6" y="3.6" width="2.6" height="2.6" fill="#9fc0ea"/></g>
<path d="M39.05 264.70H41.75L40.40 266.30Z" fill="#6a6a6a"/>
<g transform="translate(52.40,265.70)" stroke="#4a8ad4" stroke-width="1" fill="none"><path d="M-3.8 -3.8L3.8 3.8M3.8 -3.8L-3.8 3.8M0 -4.2V4.2M-4.2 0H4.2" opacity="0.85"/><circle r="1.5" fill="#e8f1fb" stroke-width="0.7"/></g>
<path d="M62.35 264.70H65.05L63.70 266.30Z" fill="#6a6a6a"/>
<path d="M71.40 260.00V271.00" stroke="#cfcdc8" stroke-width="0.8" stroke-dasharray="0.9 1.1" fill="none"/>
<g transform="translate(81.40,265.70) rotate(-40)"><rect x="-4.4" y="-1.4" width="4.2" height="2.8" rx="1.2" fill="#f4cb45" stroke="#d29d22" stroke-width="0.5"/><rect x="0.2" y="-1.4" width="4.2" height="2.8" rx="1.2" fill="#f4cb45" stroke="#d29d22" stroke-width="0.5"/></g>
<path d="M90.50 260.00V271.00" stroke="#cfcdc8" stroke-width="0.8" stroke-dasharray="0.9 1.1" fill="none"/>
<rect x="98.30" y="262.60" width="6.2" height="6.2" rx="1" fill="#e8f0fa" stroke="#7ea6da" stroke-width="1"/>
<path d="M110.65 264.70H113.35L112.00 266.30Z" fill="#6a6a6a"/>
<g transform="translate(119.50,262.30)" fill="none" stroke="#8fbce8" stroke-width="1"><path d="M0 0.5L3.4 4.6V7M7.4 0.5L3.8 4.6"/><path d="M0.5 0.6H7" stroke-width="0.7"/></g>
<path d="M133.95 264.70H136.65L135.30 266.30Z" fill="#6a6a6a"/>
<path d="M142.70 260.00V271.00" stroke="#cfcdc8" stroke-width="0.8" stroke-dasharray="0.9 1.1" fill="none"/>
<g transform="translate(150.00,263.40)"><rect x="0" y="0" width="6" height="5.2" fill="#3a72bd"/><rect x="0.8" y="1.6" width="3" height="2.2" fill="#4aa55a"/><rect x="3.4" y="3" width="2.4" height="2.2" fill="#f2f6fb"/></g>
<g transform="translate(163.40,262.00)"><rect x="0" y="2" width="5.8" height="5" fill="#3a78c6"/><rect x="0.9" y="3.6" width="4" height="2.6" fill="#e4eefa"/><path d="M4 2.6L6.6 0L7.4 0.8L4.8 3.4Z" fill="#3d9a48"/></g>
<path d="M175.70 260.00V271.00" stroke="#cfcdc8" stroke-width="0.8" stroke-dasharray="0.9 1.1" fill="none"/>
<g transform="translate(183.00,262.20)" fill="none" stroke="#d2d2d2" stroke-width="0.8"><rect x="1.6" y="0.4" width="3.6" height="6.6"/><path d="M0 2H7M0 5H7"/></g>
<path d="M195.80 264.60L197.30 266.20L198.80 264.60" stroke="#d0d0d0" stroke-width="0.7" fill="none"/>
<path d="M204.80 260.00V271.00" stroke="#cfcdc8" stroke-width="0.8" stroke-dasharray="0.9 1.1" fill="none"/>
<g transform="translate(211.40,262.00)"><circle cx="3" cy="3" r="2.4" fill="#e4eaf3" stroke="#9a9fa8" stroke-width="0.7"/><rect x="2" y="2" width="2" height="2" fill="#3d6fc4"/><path d="M4.9 4.9L7.4 7.6" stroke="#a89f92" stroke-width="1.2"/></g>
<g transform="translate(225.60,262.00)"><circle cx="3" cy="3" r="2.4" fill="#e4eaf3" stroke="#9a9fa8" stroke-width="0.7"/><rect x="2" y="2" width="2" height="2" fill="#9db6da"/><path d="M4.9 4.9L7.4 7.6" stroke="#a89f92" stroke-width="1.2"/></g>
<rect x="236.00" y="259.80" width="26.2" height="11.4" rx="1.6" fill="#fff" stroke="#a2a2a2" stroke-width="0.8"/>
<text x="238.30" y="268.00" style="font-size:6.3px" fill="#2a2a2a">108%</text>
<rect x="264.60" y="259.80" width="10.8" height="11.4" rx="1.6" fill="#f3f3f3" stroke="#a2a2a2" stroke-width="0.8"/>
<path d="M268.30 264.50L270.00 262.70L271.70 264.50M268.30 266.50L270.00 268.30L271.70 266.50" stroke="#444" stroke-width="0.8" fill="none"/>
<path d="M278.70 260.00V271.00" stroke="#cfcdc8" stroke-width="0.8" stroke-dasharray="0.9 1.1" fill="none"/>
<g transform="translate(285.00,263.20)"><rect x="0" y="0" width="8" height="5.6" fill="#2b2b2b"/><rect x="3.6" y="1.2" width="3.2" height="2.8" fill="#7d8790"/><rect x="0.8" y="1.4" width="1.8" height="1.4" fill="#bbb"/></g>
<g transform="translate(298.80,262.20)"><rect x="0" y="0" width="7" height="7" fill="#d9e8f8" stroke="#5a96da" stroke-width="0.7"/><rect x="1" y="3.2" width="2.6" height="2.8" fill="#3f80d0"/><rect x="4" y="0.8" width="2.2" height="2" fill="#3f80d0"/><path d="M3.6 0V7M0 3.2H7" stroke="#fff" stroke-width="0.5"/></g>
<g transform="translate(362.90,262.20)" fill="none" stroke="#6b9bd6" stroke-width="0.7"><path d="M0.4 1V4.4H2.6"/><rect x="2.6" y="0.3" width="2.4" height="2.2" fill="#cfe0f5"/><rect x="3.6" y="3.6" width="2.6" height="2.6" fill="#9fc0ea"/></g>
<path d="M376.35 264.70H379.05L377.70 266.30Z" fill="#6a6a6a"/>
<g transform="translate(389.70,265.70)" stroke="#4a8ad4" stroke-width="1" fill="none"><path d="M-3.8 -3.8L3.8 3.8M3.8 -3.8L-3.8 3.8M0 -4.2V4.2M-4.2 0H4.2" opacity="0.85"/><circle r="1.5" fill="#e8f1fb" stroke-width="0.7"/></g>
<path d="M399.65 264.70H402.35L401.00 266.30Z" fill="#6a6a6a"/>
<path d="M408.70 260.00V271.00" stroke="#cfcdc8" stroke-width="0.8" stroke-dasharray="0.9 1.1" fill="none"/>
<g transform="translate(418.70,265.70) rotate(-40)"><rect x="-4.4" y="-1.4" width="4.2" height="2.8" rx="1.2" fill="#f4cb45" stroke="#d29d22" stroke-width="0.5"/><rect x="0.2" y="-1.4" width="4.2" height="2.8" rx="1.2" fill="#f4cb45" stroke="#d29d22" stroke-width="0.5"/></g>
<path d="M427.80 260.00V271.00" stroke="#cfcdc8" stroke-width="0.8" stroke-dasharray="0.9 1.1" fill="none"/>
<rect x="435.60" y="262.60" width="6.2" height="6.2" rx="1" fill="#e8f0fa" stroke="#7ea6da" stroke-width="1"/>
<path d="M447.95 264.70H450.65L449.30 266.30Z" fill="#6a6a6a"/>
<g transform="translate(456.80,262.30)" fill="none" stroke="#8fbce8" stroke-width="1"><path d="M0 0.5L3.4 4.6V7M7.4 0.5L3.8 4.6"/><path d="M0.5 0.6H7" stroke-width="0.7"/></g>
<path d="M471.25 264.70H473.95L472.60 266.30Z" fill="#6a6a6a"/>
<path d="M480.00 260.00V271.00" stroke="#cfcdc8" stroke-width="0.8" stroke-dasharray="0.9 1.1" fill="none"/>
<g transform="translate(487.30,263.40)"><rect x="0" y="0" width="6" height="5.2" fill="#3a72bd"/><rect x="0.8" y="1.6" width="3" height="2.2" fill="#4aa55a"/><rect x="3.4" y="3" width="2.4" height="2.2" fill="#f2f6fb"/></g>
<g transform="translate(500.70,262.00)"><rect x="0" y="2" width="5.8" height="5" fill="#3a78c6"/><rect x="0.9" y="3.6" width="4" height="2.6" fill="#e4eefa"/><path d="M4 2.6L6.6 0L7.4 0.8L4.8 3.4Z" fill="#3d9a48"/></g>
<path d="M513.00 260.00V271.00" stroke="#cfcdc8" stroke-width="0.8" stroke-dasharray="0.9 1.1" fill="none"/>
<g transform="translate(520.30,262.20)" fill="none" stroke="#d2d2d2" stroke-width="0.8"><rect x="1.6" y="0.4" width="3.6" height="6.6"/><path d="M0 2H7M0 5H7"/></g>
<path d="M533.10 264.60L534.60 266.20L536.10 264.60" stroke="#d0d0d0" stroke-width="0.7" fill="none"/>
<path d="M542.10 260.00V271.00" stroke="#cfcdc8" stroke-width="0.8" stroke-dasharray="0.9 1.1" fill="none"/>
<g transform="translate(548.70,262.00)"><circle cx="3" cy="3" r="2.4" fill="#e4eaf3" stroke="#9a9fa8" stroke-width="0.7"/><rect x="2" y="2" width="2" height="2" fill="#3d6fc4"/><path d="M4.9 4.9L7.4 7.6" stroke="#a89f92" stroke-width="1.2"/></g>
<g transform="translate(562.90,262.00)"><circle cx="3" cy="3" r="2.4" fill="#e4eaf3" stroke="#9a9fa8" stroke-width="0.7"/><rect x="2" y="2" width="2" height="2" fill="#9db6da"/><path d="M4.9 4.9L7.4 7.6" stroke="#a89f92" stroke-width="1.2"/></g>
<rect x="573.30" y="259.80" width="26.2" height="11.4" rx="1.6" fill="#fff" stroke="#a2a2a2" stroke-width="0.8"/>
<text x="575.60" y="268.00" style="font-size:6.3px" fill="#2a2a2a">108%</text>
<rect x="601.90" y="259.80" width="10.8" height="11.4" rx="1.6" fill="#f3f3f3" stroke="#a2a2a2" stroke-width="0.8"/>
<path d="M605.60 264.50L607.30 262.70L609.00 264.50M605.60 266.50L607.30 268.30L609.00 266.50" stroke="#444" stroke-width="0.8" fill="none"/>
<path d="M616.00 260.00V271.00" stroke="#cfcdc8" stroke-width="0.8" stroke-dasharray="0.9 1.1" fill="none"/>
<g transform="translate(622.30,263.20)"><rect x="0" y="0" width="8" height="5.6" fill="#2b2b2b"/><rect x="3.6" y="1.2" width="3.2" height="2.8" fill="#7d8790"/><rect x="0.8" y="1.4" width="1.8" height="1.4" fill="#bbb"/></g>
<g transform="translate(636.10,262.20)"><rect x="0" y="0" width="7" height="7" fill="#d9e8f8" stroke="#5a96da" stroke-width="0.7"/><rect x="1" y="3.2" width="2.6" height="2.8" fill="#3f80d0"/><rect x="4" y="0.8" width="2.2" height="2" fill="#3f80d0"/><path d="M3.6 0V7M0 3.2H7" stroke="#fff" stroke-width="0.5"/></g>
<g transform="translate(24.60,56.80)"><rect x="1.7" y="0" width="2.4" height="2.2" fill="#e9b431"/><path d="M0.3 6L2.9 2L5.6 6Z" fill="#5b86c6"/><circle cx="1.4" cy="5" r="1.4" fill="#6d95d0"/><circle cx="4.5" cy="5.1" r="1.3" fill="#4da54b"/></g>
<g transform="translate(107.20,57.60)" stroke="#3a3a3a" stroke-width="0.9" fill="none"><path d="M0.4 0.4H2M3.4 0.4H5M0.4 4.2H2M3.4 4.2H5M1.2 0.4L2.2 2.3L1.2 4.2M4.2 0.4L3.2 2.3L4.2 4.2"/></g>
<g transform="translate(24.60,248.60)"><rect x="1.7" y="0" width="2.4" height="2.2" fill="#e9b431"/><path d="M0.3 6L2.9 2L5.6 6Z" fill="#5b86c6"/><circle cx="1.4" cy="5" r="1.4" fill="#6d95d0"/><circle cx="4.5" cy="5.1" r="1.3" fill="#4da54b"/></g>
<g transform="translate(131.60,249.40)" stroke="#3a3a3a" stroke-width="0.9" fill="none"><path d="M0.4 0.4H2M3.4 0.4H5M0.4 4.2H2M3.4 4.2H5M1.2 0.4L2.2 2.3L1.2 4.2M4.2 0.4L3.2 2.3L4.2 4.2"/></g>
<g transform="translate(362.00,248.60)"><rect x="1.7" y="0" width="2.4" height="2.2" fill="#e9b431"/><path d="M0.3 6L2.9 2L5.6 6Z" fill="#5b86c6"/><circle cx="1.4" cy="5" r="1.4" fill="#6d95d0"/><circle cx="4.5" cy="5.1" r="1.3" fill="#4da54b"/></g>
<g transform="translate(476.00,249.40)" stroke="#3a3a3a" stroke-width="0.9" fill="none"><path d="M0.4 0.4H2M3.4 0.4H5M0.4 4.2H2M3.4 4.2H5M1.2 0.4L2.2 2.3L1.2 4.2M4.2 0.4L3.2 2.3L4.2 4.2"/></g>
<path d="M957.60 69.60L954.40 72.60L957.60 75.60Z" fill="#cfcfcf" stroke="#3a3a3a" stroke-width="0.7"/>
<path d="M352.80 261.30L349.60 264.30L352.80 267.30Z" fill="#cfcfcf" stroke="#3a3a3a" stroke-width="0.7"/>
<path d="M957.60 261.30L954.40 264.30L957.60 267.30Z" fill="#cfcfcf" stroke="#3a3a3a" stroke-width="0.7"/>
<g transform="translate(964.8,574.6)"><path d="M0 1.2Q2 -0.6 4.4 1.2L3.4 3L1 2.6Z" fill="#8fbf8a"/><path d="M3 2.4Q7 2 6.6 5.4Q5.6 7.8 3.8 7.2Q2 6 3 2.4Z" fill="#ee8e92"/></g>
<path d="M947.7 155.8H950.7M947.7 157H950.7M947.7 158.2H950.7" stroke="#5f84c0" stroke-width="0.4" fill="none"/>
<path d="M342.8 415.8H345.8M342.8 417H345.8M342.8 418.2H345.8" stroke="#5f84c0" stroke-width="0.4" fill="none"/>
<path d="M947.7 415.8H950.7M947.7 417H950.7M947.7 418.2H950.7" stroke="#5f84c0" stroke-width="0.4" fill="none"/>
<path d="M481.8 236.1V239.1M483 236.1V239.1M484.2 236.1V239.1" stroke="#5f84c0" stroke-width="0.4" fill="none"/>
<path d="M179.8 563.5V566.5M181 563.5V566.5M182.2 563.5V566.5" stroke="#5f84c0" stroke-width="0.4" fill="none"/>
<path d="M650.8 563.5V566.5M652 563.5V566.5M653.2 563.5V566.5" stroke="#5f84c0" stroke-width="0.4" fill="none"/></svg>
<div style="left:779px;top:562.5px;width:200px;height:31px;background:rgba(255,255,255,0.45);"></div>
<div style="left:795px;top:564.5px;font-family:'Liberation Sans',sans-serif;font-size:19.2px;line-height:26px;color:#9ccf9a;">www.cntronics.com</div>
</body></html>
